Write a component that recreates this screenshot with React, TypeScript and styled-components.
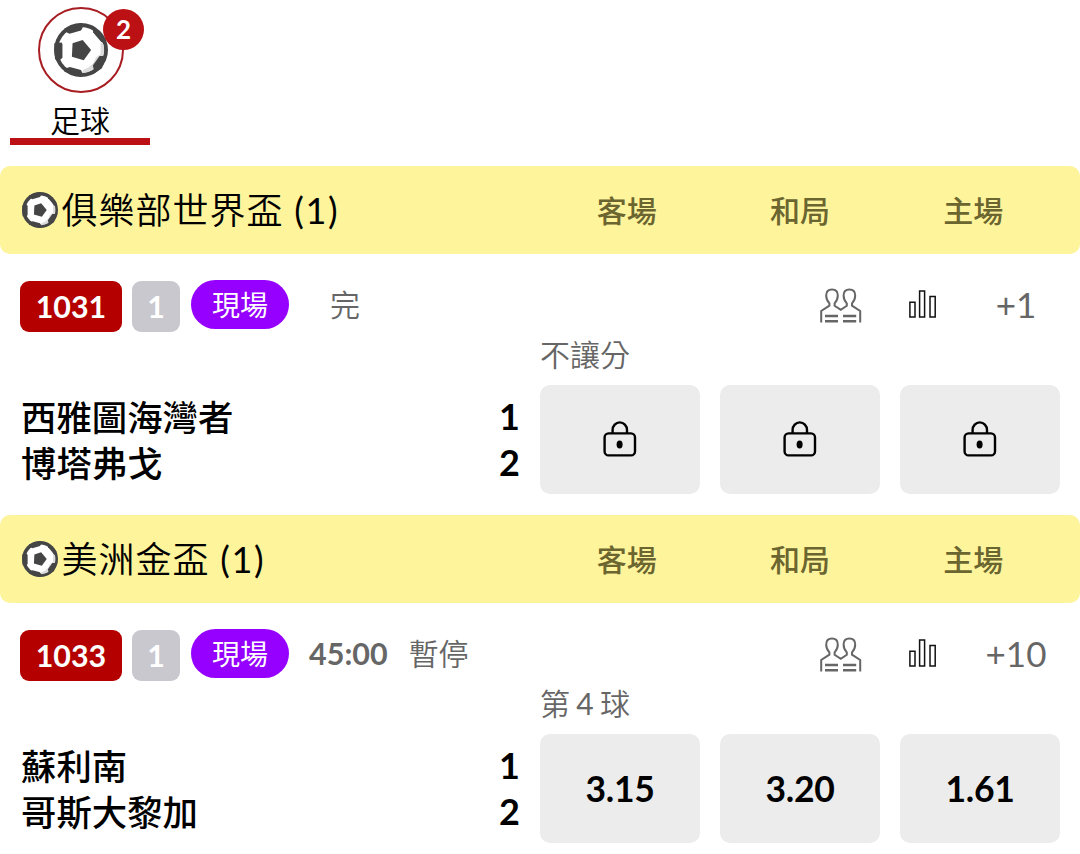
import styled, { createGlobalStyle } from "styled-components";

const brandRed = "#bb1014";
const tagRed = "#b50000";
const liveColor = "#9500ff";
const leagueColor = "#fef49b";
const oddColor = "#ececec";
const secondaryTextColor = "#666666";

interface Match {
  id: string;
  league: string;
  count: number;
  time?: string;
  status: string;
  more: string;
  market: string[];
  teams: { name: string; score: number }[];
  odds: (string | null)[];
}

const matches: Match[] = [
  {
    id: "1031",
    league: "俱樂部世界盃",
    count: 1,
    status: "完",
    more: "+1",
    market: ["不讓分"],
    teams: [
      { name: "西雅圖海灣者", score: 1 },
      { name: "博塔弗戈", score: 2 },
    ],
    odds: [null, null, null],
  },
  {
    id: "1033",
    league: "美洲金盃",
    count: 1,
    time: "45:00",
    status: "暫停",
    more: "+10",
    market: ["第", " 4 ", "球"],
    teams: [
      { name: "蘇利南", score: 1 },
      { name: "哥斯大黎加", score: 2 },
    ],
    odds: ["3.15", "3.20", "1.61"],
  },
];

const BallIcon = ({ size, inner = 68 }: { size: number; inner?: number }) => (
  <svg width={size} height={size} viewBox="-80 -80 160 160">
    <circle r="80" fill="#454545" />
    <circle r={inner} fill="#fff" />
    <path d="M58 -22 L66 -18 A68 68 0 0 1 4 68 L6 59 Q36 50 44 22 L58 12 Z" fill="#dcdcdc" />
    <g fill="#454545">
      <path d="M5 -30 L30 0 L8 30 L-27 20 L-25 -20 Z" />
      <path d="M-79 -20 L-57 -22 L-55 -16 L-55 22 L-60 28 L-77 28 Z" />
      <path d="M-50 -64 L0 -80 L5 -67 L0 -58 L-34 -48 L-42 -52 Z" />
      <path d="M34 -73 L74 -32 L70 -20 L60 -24 L36 -52 Z" />
      <path d="M78 12 L66 18 L55 18 L35 46 L38 58 L34 73 L62 54 Z" />
      <path d="M-50 64 L-42 53 L-33 50 L0 59 L4 68 L0 80 Z" />
    </g>
  </svg>
);

const PeopleIcon = () => (
  <svg width="42" height="36" viewBox="0 0 42 36" fill="none" stroke="#666" strokeWidth="2">
    <path d="M1.2 34.6 V23 L9.4 17.6 V15.4 C7 13 6.2 10.4 6.2 7.6 C6.2 3.8 8.4 1.6 12 1.6 C15.6 1.6 17.8 3.8 17.8 7.6 C17.8 10.4 17 13 14.6 15.4 V17.8 L20.8 21.8 L26.8 17.8 V15.4 C24.4 13 23.6 10.4 23.6 7.6 C23.6 3.8 25.8 1.6 29.4 1.6 C33 1.6 35.2 3.8 35.2 7.6 C35.2 10.4 34.4 13 32 15.4 V17.6 L40.2 23 V34.6" />
    <path d="M5 28 H18 M5 33.2 H18 M23 28 H36.2 M23 33.2 H36.2" strokeWidth="2.4" />
  </svg>
);

const ChartIcon = () => (
  <svg width="28" height="28" viewBox="0 0 28 28" fill="none" stroke="#111" strokeWidth="1.5">
    <path d="M0.9 12.2 H6 V27 H0.9 Z M10.6 0.9 H15.6 V27 H10.6 Z M21 6.5 H26.2 V27 H21 Z" />
  </svg>
);

const LockIcon = () => (
  <svg width="34" height="36" viewBox="0 0 34 36" fill="none" stroke="#000" strokeWidth="2.4">
    <rect x="1.6" y="12.4" width="30.4" height="22" rx="4" />
    <path d="M9.6 12 V9 A7 7.4 0 0 1 24 9 V12" />
    <ellipse cx="16.6" cy="23.4" rx="3" ry="4" fill="#000" stroke="none" />
  </svg>
);

const App = () => {
  return (
    <Page>
      <GlobalStyle />
      <SportTabs>
        <SportTab>
          <SportCircle>
            <BallIcon size={54} />
            <Badge>2</Badge>
          </SportCircle>
          <SportName>足球</SportName>
        </SportTab>
      </SportTabs>
      {matches.map((match) => (
        <LeagueSection key={match.id}>
          <LeagueBar>
            <LeagueName>
              <BallIcon size={36} inner={64} />
              <span>
                {match.league} <Count>({match.count})</Count>
              </span>
            </LeagueName>
            <Columns>
              <span>客場</span>
              <span>和局</span>
              <span>主場</span>
            </Columns>
          </LeagueBar>
          <InfoRow>
            <Tag $color={tagRed} $width={102}>
              {match.id}
            </Tag>
            <Tag $color="#c9c8cf" $width={48}>
              1
            </Tag>
            <LiveTag>現場</LiveTag>
            <Time>{match.time}</Time>
            <Status>{match.status}</Status>
            <Tools>
              <PeopleIcon />
              <ChartIcon />
              <More>{match.more}</More>
            </Tools>
          </InfoRow>
          <MatchBody>
            <Teams>
              {match.teams.map((team) => (
                <TeamRow key={team.name}>
                  <TeamName>{team.name}</TeamName>
                  <Score>{team.score}</Score>
                </TeamRow>
              ))}
            </Teams>
            <Market>
              <MarketName>
                {match.market.map((part) =>
                  Number(part) ? <MarketNumber key={part}>{part}</MarketNumber> : part
                )}
              </MarketName>
              <Odds>
                {match.odds.map((odd, index) => (
                  <OddButton key={index}>{odd ? <span>{odd}</span> : <LockIcon />}</OddButton>
                ))}
              </Odds>
            </Market>
          </MatchBody>
        </LeagueSection>
      ))}
    </Page>
  );
};

export default App;

const GlobalStyle = createGlobalStyle`
  * {
    box-sizing: border-box;
  }

  body {
    margin: 0;
    background: #fff;
    font-family: Lato, "Noto Sans CJK TC", sans-serif;
  }

  svg {
    display: block;
    flex-shrink: 0;
  }
`;

const Page = styled.div`
  width: 1080px;
  height: 854px;
  overflow: hidden;
  color: #000;
`;

const SportTabs = styled.div`
  height: 166px;
  padding: 7px 10px 0;
`;

const SportTab = styled.div`
  width: 140px;
  height: 138px;
  display: flex;
  flex-direction: column;
  align-items: center;
  border-bottom: 7px solid ${brandRed};
`;

const SportCircle = styled.div`
  position: relative;
  width: 86px;
  height: 86px;
  flex-shrink: 0;
  margin-left: 1px;
  display: flex;
  align-items: center;
  justify-content: center;
  padding-bottom: 1px;
  border: 2px solid #a81d22;
  border-radius: 50%;
`;

const Badge = styled.span`
  position: absolute;
  top: 0;
  right: -22.5px;
  width: 41px;
  height: 41px;
  border-radius: 50%;
  background: ${brandRed};
  color: #fff;
  font-size: 26px;
  font-weight: 700;
  line-height: 40px;
  text-align: center;
`;

const SportName = styled.div`
  margin-top: 7px;
  flex-shrink: 0;
  font-size: 30px;
  font-weight: 350;
  line-height: 40px;
`;

const LeagueSection = styled.section`
  height: 349px;
`;

const LeagueBar = styled.div`
  height: 88px;
  padding: 0 20px 0 22px;
  display: flex;
  align-items: center;
  justify-content: space-between;
  border-radius: 10px;
  background: ${leagueColor};
`;

const LeagueName = styled.div`
  display: flex;
  align-items: center;
  gap: 3.5px;
  font-size: 36px;
  font-weight: 350;
  line-height: 44px;
  letter-spacing: 1px;
`;

const Count = styled.span`
  font-weight: 400;
  letter-spacing: 1.6px;
`;

const Columns = styled.div`
  width: 520px;
  padding-bottom: 3px;
  display: grid;
  grid-template-columns: repeat(3, 1fr);
  font-size: 30px;
  font-weight: 500;
  text-align: center;
  color: #6b6530;
`;

const InfoRow = styled.div`
  height: 79px;
  padding: 27px 20px 0;
  display: flex;
  align-items: flex-start;
`;

const Tag = styled.span<{ $color: string; $width: number }>`
  width: ${(props) => props.$width}px;
  height: 51px;
  margin-right: 10px;
  border-radius: 9px;
  background: ${(props) => props.$color};
  color: #fff;
  font-size: 30.4px;
  font-weight: 700;
  line-height: 50px;
  text-align: center;
`;

const LiveTag = styled.span`
  width: 98px;
  height: 49px;
  margin: -1px 20px 0 1px;
  border-radius: 25px;
  background: ${liveColor};
  color: #fff;
  font-size: 28px;
  font-weight: 400;
  line-height: 50px;
  text-align: center;
`;

const Time = styled.span`
  color: ${secondaryTextColor};
  font-size: 30.5px;
  font-weight: 700;
  line-height: 47px;
`;

const Status = styled.span`
  margin-left: 21px;
  color: ${secondaryTextColor};
  font-size: 30px;
  font-weight: 350;
  line-height: 47px;
`;

const Tools = styled.div`
  height: 49px;
  margin-left: auto;
  display: flex;
  align-items: center;

  svg + svg {
    margin-left: 47px;
    margin-bottom: 4px;
  }
`;

const More = styled.span`
  width: 88px;
  margin-left: 35px;
  padding-bottom: 4px;
  color: ${secondaryTextColor};
  font-size: 35px;
  text-align: center;
`;

const MatchBody = styled.div`
  height: 182px;
  display: flex;
`;

const Teams = styled.div`
  width: 540px;
  padding: 61px 20px 0 21px;
`;

const TeamRow = styled.div`
  height: 46px;
  display: flex;
  justify-content: space-between;
`;

const TeamName = styled.span`
  font-size: 35.4px;
  font-weight: 500;
  line-height: 48px;
`;

const Score = styled.span`
  font-size: 36px;
  font-weight: 700;
  line-height: 44px;
`;

const Market = styled.div`
  width: 520px;
`;

const MarketName = styled.div`
  height: 52px;
  color: ${secondaryTextColor};
  font-size: 30px;
  font-weight: 350;
  line-height: 42px;
`;

const MarketNumber = styled.span`
  font-weight: 400;
  word-spacing: -1.4px;
`;

const Odds = styled.div`
  display: grid;
  grid-template-columns: repeat(3, 160px);
  gap: 20px;
`;

const OddButton = styled.div`
  height: 109px;
  padding-bottom: 2px;
  display: flex;
  align-items: center;
  justify-content: center;
  border-radius: 10px;
  background: ${oddColor};
  font-size: 35.5px;
  font-weight: 700;
  letter-spacing: -0.3px;

  span {
    padding-top: 2px;
  }
`;
